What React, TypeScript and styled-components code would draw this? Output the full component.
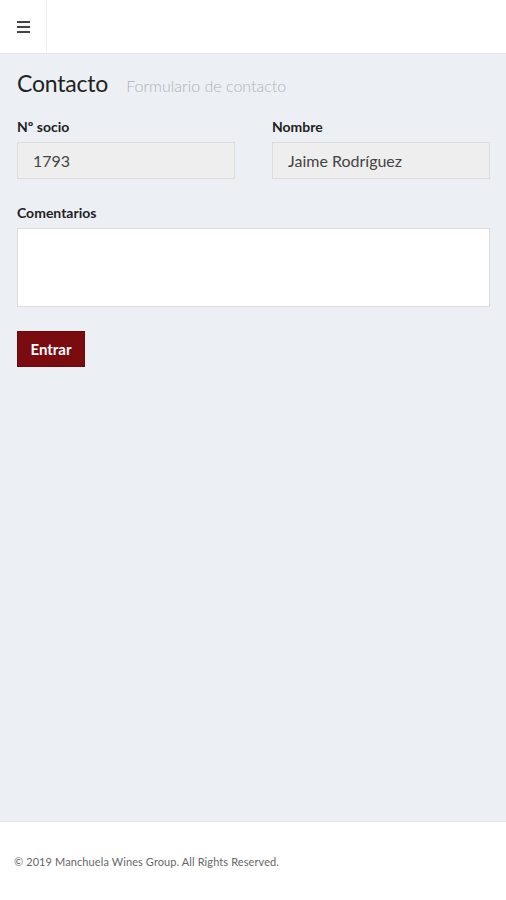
import React from 'react';
import styled, { createGlobalStyle } from 'styled-components';

const GlobalStyle = createGlobalStyle`
    html, body {
        margin: 0;
        padding: 0;
        height: 100%;
    }
    body {
        font-family: Lato, "Open Sans", "Liberation Sans", sans-serif;
        background: #ecf0f5;
        color: #333;
    }
    #root {
        min-height: 100%;
    }
`;

const App = () => {
    return (
        <>
            <GlobalStyle />
            <Page>
                <Header>
                    <Toggle aria-label="menu">
                        <Bar />
                        <Bar />
                        <Bar />
                    </Toggle>
                </Header>
                <Content>
                    <TitleRow>
                        <Title>Contacto</Title>
                        <SubTitle>Formulario de contacto</SubTitle>
                    </TitleRow>
                    <Row>
                        <Field>
                            <Label>Nº socio</Label>
                            <Input value="1793" readOnly />
                        </Field>
                        <Field>
                            <Label>Nombre</Label>
                            <Input value="Jaime Rodríguez" readOnly />
                        </Field>
                    </Row>
                    <Field>
                        <Label>Comentarios</Label>
                        <TextArea />
                    </Field>
                    <SubmitBtn>Entrar</SubmitBtn>
                </Content>
                <Footer>© 2019 Manchuela Wines Group. All Rights Reserved.</Footer>
            </Page>
        </>
    );
};

export default App;

const Page = styled.div`
    display: flex;
    flex-direction: column;
    min-height: 900px;
`

const Header = styled.header`
    height: 53px;
    background: #fff;
    border-bottom: 1px solid #e4e7ec;
    display: flex;
`

const Toggle = styled.div`
    width: 47px;
    border-right: 1px solid #eef0f3;
    display: flex;
    flex-direction: column;
    justify-content: center;
    align-items: flex-start;
    gap: 3px;
    padding-left: 17px;
    box-sizing: border-box;
`

const Bar = styled.span`
    display: block;
    width: 13px;
    height: 2px;
    background: #444;
`

const Content = styled.main`
    flex: 1;
    padding: 17px 16px 0 17px;
    display: flex;
    flex-direction: column;
    align-items: stretch;
`

const TitleRow = styled.div`
    display: flex;
    align-items: baseline;
    gap: 18px;
    margin-bottom: 22px;
`

const Title = styled.h1`
    margin: 0;
    font-size: 23px;
    font-weight: 400;
    letter-spacing: -0.2px;
    color: #222;
    line-height: 1.1;
`

const SubTitle = styled.span`
    font-size: 16px;
    font-weight: 300;
    color: #aeb1b6;
`

const Row = styled.div`
    display: grid;
    grid-template-columns: minmax(0, 1fr) minmax(0, 1fr);
    column-gap: 37px;
    margin-bottom: 10px;
`

const Field = styled.div`
    display: flex;
    flex-direction: column;
    min-width: 0;
    margin-bottom: 15px;
`

const Label = styled.label`
    font-size: 14px;
    font-weight: 700;
    color: #222;
    margin-bottom: 7px;
`

const Input = styled.input`
    width: 100%;
    min-width: 0;
    height: 37px;
    box-sizing: border-box;
    border: 1px solid #dcdcdc;
    background: #eeeeee;
    padding: 0 15px;
    font-family: inherit;
    font-size: 16px;
    color: #444;
    outline: none;
`

const TextArea = styled.textarea`
    height: 79px;
    box-sizing: border-box;
    border: 1px solid #dcdcdc;
    background: #fff;
    resize: none;
    font-family: inherit;
    outline: none;
`

const SubmitBtn = styled.button`
    align-self: flex-start;
    width: 68px;
    height: 36px;
    margin-top: 9px;
    background: #7a0b0e;
    border: 1px solid #6a0709;
    color: #fff;
    font-family: inherit;
    font-size: 15px;
    font-weight: 700;
    cursor: pointer;
`

const Footer = styled.footer`
    height: 78px;
    background: #fff;
    border-top: 1px solid #e2e5ea;
    display: flex;
    align-items: center;
    padding-left: 14px;
    font-size: 11px;
    letter-spacing: 0.1px;
    color: #666;
`
